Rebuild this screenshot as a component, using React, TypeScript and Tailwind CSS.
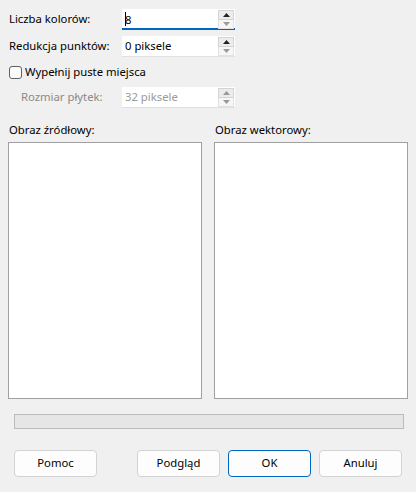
const font = { fontFamily: '"Noto Sans", "Open Sans", sans-serif' };

type SpinProps = { value: string; focused?: boolean; disabled?: boolean };

const Spin = ({ value, focused, disabled }: SpinProps) => {
  return (
    <div
      className={`relative flex h-[21px] w-[113px] items-center bg-white pl-[3px] ${
        focused ? "border-b-2 border-[#0067c0]" : "border-b border-[#e0e0e0]"
      }`}
    >
      <span
        className={`flex-1 text-[11.3px] leading-none ${
          disabled ? "text-[#9a9a9a]" : "text-black"
        }`}
      >
        {focused && <span className="mr-[-1px] inline-block h-[14px] w-px translate-y-[2px] bg-black" />}
        {value}
      </span>
      <div className="mr-[1px] mt-[1px] flex h-[19px] w-[16px] flex-col self-start">
        <div className="flex h-[10px] items-center justify-center border border-[#d4d4d4] bg-[#ececec]">
          <svg width="7" height="4" viewBox="0 0 7 4">
            <path d="M3.5 0 L7 4 L0 4 Z" fill={disabled ? "#9a9a9a" : "#222"} />
          </svg>
        </div>
        <div className="flex h-[9px] items-center justify-center border border-t-0 border-[#e2e2e2] bg-[#f6f6f6]">
          <svg width="7" height="4" viewBox="0 0 7 4">
            <path d="M0 0 L7 0 L3.5 4 Z" fill="#9a9a9a" />
          </svg>
        </div>
      </div>
    </div>
  );
};

const Button = ({ label, primary }: { label: string; primary?: boolean }) => {
  return (
    <button
      className={`flex h-[27px] w-[83px] items-center justify-center rounded-[4px] bg-[#fdfdfd] text-[11.3px] text-black ${
        primary ? "border border-[#0067c0]" : "border border-[#d3d3d3]"
      }`}
    >
      {label}
    </button>
  );
};

export default function App() {
  return (
    <div className="h-[492px] w-[416px] bg-[#f0f0f0] px-2 pt-2 text-black" style={font}>
      <div className="flex h-[22px] items-center">
        <span className="w-[114px] pl-[1px] text-[11.3px]">Liczba kolorów:</span>
        <Spin value="8" focused />
      </div>
      <div className="mt-[6px] flex h-[21px] items-center">
        <span className="w-[114px] pl-[1px] text-[11.3px]">Redukcja punktów:</span>
        <Spin value="0 piksele" />
      </div>
      <div className="mt-[6px] flex h-[18px] items-center">
        <span className="ml-[1px] h-[13px] w-[13px] rounded-[3px] border border-[#5f5f5f] bg-[#fbfbfb]" />
        <span className="ml-[3px] text-[11.3px]">Wypełnij puste miejsca</span>
      </div>
      <div className="mt-[6px] flex h-[21px] items-center">
        <span className="w-[114px] pl-[13px] text-[11.3px] text-[#8a8a8a]">Rozmiar płytek:</span>
        <Spin value="32 piksele" disabled />
      </div>

      <div className="mt-[14px] flex gap-[12px]">
        <div className="flex w-[194px] flex-col">
          <span className="h-[16px] pl-[1px] text-[11.3px] leading-[16px]">Obraz źródłowy:</span>
          <div className="mt-[4px] h-[257px] border border-[#a0a0a0] bg-white" />
        </div>
        <div className="flex w-[194px] flex-col">
          <span className="h-[16px] pl-[1px] text-[11.3px] leading-[16px]">Obraz wektorowy:</span>
          <div className="mt-[4px] h-[257px] border border-[#a0a0a0] bg-white" />
        </div>
      </div>

      <div className="ml-[6px] mt-[15px] h-[15px] w-[390px] border border-[#bcbcbc] bg-[#e6e6e6]" />

      <div className="ml-[6px] mt-[21px] flex">
        <Button label="Pomoc" />
        <div className="ml-[40px] flex gap-[8px]">
          <Button label="Podgląd" />
          <Button label="OK" primary />
          <Button label="Anuluj" />
        </div>
      </div>
    </div>
  );
}
